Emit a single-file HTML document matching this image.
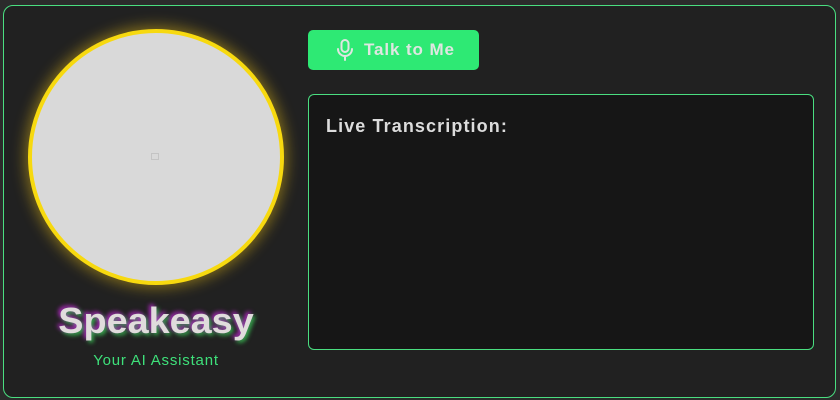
<!DOCTYPE html>
<html><head><meta charset="utf-8"><style>
html,body{margin:0;padding:0;width:840px;height:400px;background:#2b2b2b;overflow:hidden;font-family:"Liberation Sans",sans-serif}
.card{position:absolute;left:3px;top:5px;width:833px;height:393px;box-sizing:border-box;border:1px solid #4ade80;border-radius:10px;background:#212121}
.circle{position:absolute;left:28px;top:29px;width:256px;height:256px;box-sizing:border-box;border-radius:50%;background:#d9d9d9;border:4px solid #f7d90f;box-shadow:0 0 14px 3px rgba(247,200,20,.45)}
.ph{position:absolute;left:151px;top:153px;width:8px;height:7px;border:1px solid #c4c4c4;box-sizing:border-box}
h1{position:absolute;left:0;width:312px;top:300px;margin:0;text-align:center;font-size:36px;font-weight:bold;color:#e0dcdc;letter-spacing:0px;transform:scaleX(1.05);text-shadow:-2px -2px 4px rgba(200,40,220,.8),2px 2px 4px rgba(60,220,90,.8)}
.sub{position:absolute;left:0;width:312px;top:352px;text-align:center;font-size:15px;color:#3ee07a;letter-spacing:0.8px}
.btn{position:absolute;left:308px;top:30px;width:171px;height:40px;background:#2ee974;border-radius:5px;color:#dfe6e1;font-weight:bold;font-size:17px;letter-spacing:0.9px;box-sizing:border-box;padding-left:56px;line-height:40px;white-space:nowrap}
.btn svg{position:absolute;left:28px;top:9px}
.panel{position:absolute;left:308px;top:94px;width:506px;height:256px;box-sizing:border-box;border:1px solid #4ade80;border-radius:6px;background:#161616}
.panel div{position:absolute;left:17px;top:21px;font-weight:bold;font-size:18px;color:#dcdcdc;letter-spacing:1.1px}
</style></head><body>
<div class="card"></div>
<div class="circle"></div>
<div class="ph"></div>
<h1>Speakeasy</h1>
<div class="sub">Your AI Assistant</div>
<div class="btn"><svg width="18" height="22" viewBox="0 0 18 22" fill="none" stroke="#dfe6e1" stroke-width="2" stroke-linecap="round"><rect x="5.5" y="1" width="7" height="12" rx="3.5"/><path d="M2 10a7 7 0 0 0 14 0M9 17v4"/></svg>Talk to Me</div>
<div class="panel"><div>Live Transcription:</div></div>
</body></html>
